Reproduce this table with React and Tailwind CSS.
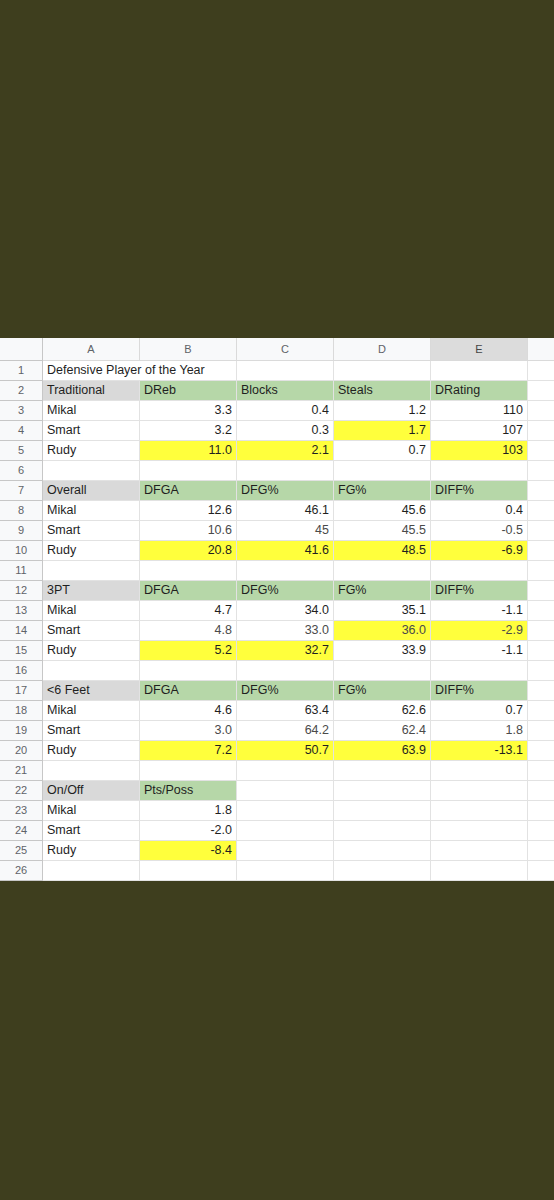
import React from "react";

const Y = "y";
const rows = [
  { n: 1, title: "Defensive Player of the Year" },
  { n: 2, cells: [["Traditional", "k"], ["DReb", "g"], ["Blocks", "g"], ["Steals", "g"], ["DRating", "g"]] },
  { n: 3, cells: [["Mikal"], ["3.3"], ["0.4"], ["1.2"], ["110"]] },
  { n: 4, cells: [["Smart"], ["3.2"], ["0.3"], ["1.7", Y], ["107"]] },
  { n: 5, cells: [["Rudy"], ["11.0", Y], ["2.1", Y], ["0.7"], ["103", Y]] },
  { n: 6, cells: [] },
  { n: 7, cells: [["Overall", "k"], ["DFGA", "g"], ["DFG%", "g"], ["FG%", "g"], ["DIFF%", "g"]] },
  { n: 8, cells: [["Mikal"], ["12.6"], ["46.1"], ["45.6"], ["0.4"]] },
  { n: 9, light: true, cells: [["Smart"], ["10.6"], ["45"], ["45.5"], ["-0.5"]] },
  { n: 10, cells: [["Rudy"], ["20.8", Y], ["41.6", Y], ["48.5", Y], ["-6.9", Y]] },
  { n: 11, cells: [] },
  { n: 12, cells: [["3PT", "k"], ["DFGA", "g"], ["DFG%", "g"], ["FG%", "g"], ["DIFF%", "g"]] },
  { n: 13, cells: [["Mikal"], ["4.7"], ["34.0"], ["35.1"], ["-1.1"]] },
  { n: 14, light: true, cells: [["Smart"], ["4.8"], ["33.0"], ["36.0", Y], ["-2.9", Y]] },
  { n: 15, cells: [["Rudy"], ["5.2", Y], ["32.7", Y], ["33.9"], ["-1.1"]] },
  { n: 16, cells: [] },
  { n: 17, cells: [["<6 Feet", "k"], ["DFGA", "g"], ["DFG%", "g"], ["FG%", "g"], ["DIFF%", "g"]] },
  { n: 18, cells: [["Mikal"], ["4.6"], ["63.4"], ["62.6"], ["0.7"]] },
  { n: 19, light: true, cells: [["Smart"], ["3.0"], ["64.2"], ["62.4"], ["1.8"]] },
  { n: 20, cells: [["Rudy"], ["7.2", Y], ["50.7", Y], ["63.9", Y], ["-13.1", Y]] },
  { n: 21, cells: [] },
  { n: 22, cells: [["On/Off", "k"], ["Pts/Poss", "g"]] },
  { n: 23, cells: [["Mikal"], ["1.8"]] },
  { n: 24, cells: [["Smart"], ["-2.0"]] },
  { n: 25, cells: [["Rudy"], ["-8.4", Y]] },
  { n: 26, cells: [] },
];

const bgFor = (t) =>
  t === "g" ? "bg-[#b6d7a8]" : t === "k" ? "bg-[#d9d9d9]" : t === "y" ? "bg-[#ffff3c]" : "bg-white";

function Cell({ value, type, col, light }) {
  const header = type === "g" || type === "k";
  const align = col === 0 || header ? "justify-start" : "justify-end";
  const color = light && col > 0 && !header ? "text-[#4a4a4a]" : "text-[#1f1f1f]";
  return (
    <div
      className={`h-[20px] flex items-center px-[4px] border-r border-b border-[#e2e2e2] whitespace-nowrap overflow-hidden ${bgFor(type)} ${align} ${color}`}
    >
      {value}
    </div>
  );
}

export default function App() {
  const letters = ["A", "B", "C", "D", "E"];
  return (
    <div className="min-h-[1200px] w-[554px] bg-[#3e3e1e] pt-[338px] overflow-hidden">
      <div
        className="grid bg-white text-[12.5px] leading-none"
        style={{ fontFamily: '"Liberation Sans", Arial, sans-serif' }}
      >
        <div className="grid grid-cols-[43px_97px_97px_97px_97px_97px_1fr] h-[23px] bg-[#f8f9fa] text-[11px] text-[#5f6368]">
          <div className="border-r border-b border-[#c7c7c7]" />
          {letters.map((l) => (
            <div
              key={l}
              className={`flex items-center justify-center border-r border-b border-[#dadada] ${l === "E" ? "bg-[#dcdcdc] text-[#444]" : ""}`}
            >
              {l}
            </div>
          ))}
          <div className="border-b border-[#dadada]" />
        </div>
        {rows.map((r) => {
          const cells = r.cells || [];
          return (
            <div key={r.n} className="grid grid-cols-[43px_97px_97px_97px_97px_97px_1fr]">
              <div className="h-[20px] flex items-center justify-center bg-[#f8f9fa] border-r border-b border-[#c7c7c7] text-[11px] text-[#5f6368]">
                {r.n}
              </div>
              {r.title ? (
                <>
                  <div className="col-span-2 h-[20px] flex items-center px-[4px] border-r border-b border-[#e2e2e2] whitespace-nowrap text-[#1f1f1f]">
                    {r.title}
                  </div>
                  <Cell col={3} />
                  <Cell col={4} />
                  <Cell col={5} />
                </>
              ) : (
                [0, 1, 2, 3, 4].map((c) => {
                  const cell = cells[c] || [];
                  return <Cell key={c} col={c} value={cell[0]} type={cell[1]} light={r.light} />;
                })
              )}
              <div className="h-[20px] border-b border-[#e2e2e2] bg-white" />
            </div>
          );
        })}
      </div>
    </div>
  );
}
